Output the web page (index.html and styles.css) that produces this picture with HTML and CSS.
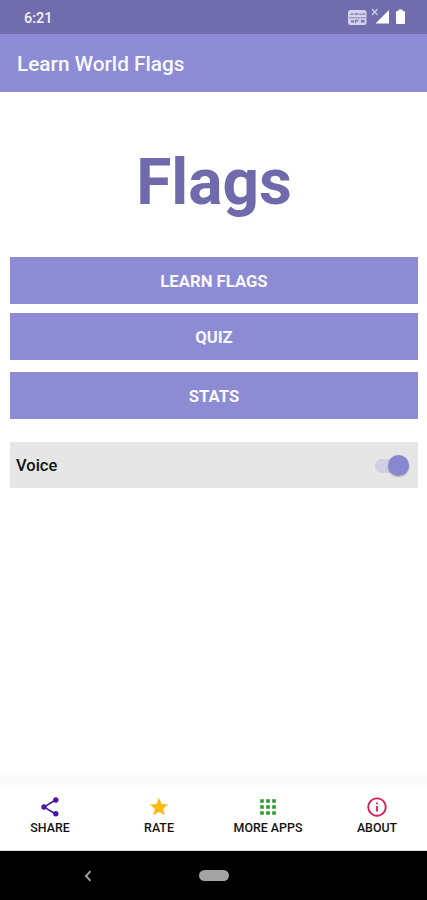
FILE: index.html
```html
<!DOCTYPE html>
<html lang="en">
<head>
<meta charset="utf-8">
<title>Learn World Flags</title>
<link rel="stylesheet" href="styles.css">
</head>
<body>
<div class="status">
  <span class="time">6:21</span>
  <svg class="status-icons" width="60" height="18" viewBox="0 0 60 18">
    <rect x="0" y="2" width="18.500" height="15" rx="2.500" fill="#d3d2ec"/>
    <path d="M2.500 6.200h3m1 0h4m1 0h2m1 0h2.500" stroke="#8f8bc0" stroke-width="1.800"/>
    <path d="M1 9.800h17" stroke="#8783ba" stroke-width="1"/>
    <path d="M3 12.500h3v2H3zM13 12h3.500v2.500H13z" fill="#7974af"/>
    <path d="M7.500 15v-2.500h3" fill="none" stroke="#7974af" stroke-width="1.300"/>
    <path d="M24 1l5.500 6m0-6l-5.500 6" stroke="#cfceea" stroke-width="1.300"/>
    <path d="M41 2v13.500H27.500z" fill="#fff"/>
    <path d="M50.500 1.500h4V3H56q1 0 1 1v11q0 1-1 1h-7q-1 0-1-1V4q0-1 1-1h1.500z" fill="#fff"/>
  </svg>
</div>
<header class="appbar">Learn World Flags</header>
<main class="content">
  <h1 class="title">Flags</h1>
  <div class="menu">
    <button class="btn">LEARN FLAGS</button>
    <button class="btn btn-quiz">QUIZ</button>
    <button class="btn">STATS</button>
  </div>
  <div class="voice">
    <span>Voice</span>
    <span class="switch"><span class="thumb"></span></span>
  </div>
</main>
<footer class="footer">
  <div class="item">
    <svg width="22" height="22" viewBox="0 0 22 22" fill="#4a16a8"><path d="M16.500 4L5 11l11.500 7" fill="none" stroke="#4a16a8" stroke-width="1.500"/><circle cx="16.800" cy="4" r="2.700"/><circle cx="5" cy="11" r="2.700"/><circle cx="16.800" cy="17.800" r="2.700"/></svg>
    <span>SHARE</span>
  </div>
  <div class="item">
    <svg width="22" height="22" viewBox="0 0 24 24"><path d="M12 17.270 18.180 21l-1.640-7.030L22 9.240l-7.190-.61L12 2 9.190 8.630 2 9.240l5.460 4.730L5.820 21z" fill="#fdbb12"/></svg>
    <span>RATE</span>
  </div>
  <div class="item">
    <svg width="22" height="22" viewBox="0 0 22 22"><path d="M3.200 3.200h3.600v3.600H3.200zm6 0h3.600v3.600H9.200zm6 0h3.600v3.600h-3.600zM3.200 9.200h3.600v3.600H3.200zm6 0h3.600v3.600H9.200zm6 0h3.600v3.600h-3.600zM3.200 15.200h3.600v3.600H3.200zm6 0h3.600v3.600H9.200zm6 0h3.600v3.600h-3.600z" fill="#2b9c2b"/></svg>
    <span>MORE APPS</span>
  </div>
  <div class="item">
    <svg width="22" height="22" viewBox="0 0 24 24"><path d="M11 7h2v2h-2zm0 4h2v6h-2zm1-9.500C6.200 1.500 1.500 6.200 1.500 12S6.200 22.500 12 22.500 22.500 17.800 22.500 12 17.800 1.500 12 1.500zm0 19c-4.700 0-8.500-3.800-8.500-8.500S7.300 3.500 12 3.500s8.500 3.800 8.500 8.500-3.800 8.500-8.500 8.500z" fill="#d91c56"/></svg>
    <span>ABOUT</span>
  </div>
</footer>
<nav class="navbar">
  <svg width="8" height="12" viewBox="0 0 8 12"><path d="M6.500 1.200L2 6l4.500 4.800" fill="none" stroke="#a0a0a0" stroke-width="1.900"/></svg>
  <span class="pill"></span>
  <span></span>
</nav>
</body>
</html>
```
FILE: styles.css
```css
* { box-sizing: border-box; }
body {
  margin: 0;
  height: 900px;
  display: flex;
  flex-direction: column;
  overflow: hidden;
  background: #fff;
  font-family: Roboto, sans-serif;
  font-weight: 500;
}
.status {
  height: 34px;
  padding: 2px 19px 0 24px;
  display: flex;
  align-items: center;
  justify-content: space-between;
  background: #706cad;
  color: #f3f3fd;
  font-size: 14.5px;
}
.status-icons { margin-top: -3px; }
.appbar {
  height: 58px;
  padding: 1px 17px 0;
  display: flex;
  align-items: center;
  background: #8c8bd3;
  color: #f8f8ff;
  font-size: 20.8px;
}
.content {
  flex: 1;
  padding: 0 9px 0 10px;
}
.title {
  margin: 52px 0 35px;
  height: 78px;
  line-height: 78px;
  text-align: center;
  color: #6e6aac;
  font-size: 64px;
  font-weight: 700;
}
.menu {
  display: flex;
  flex-direction: column;
}
.btn {
  height: 47px;
  padding: 1px 0 0;
  border: 0;
  background: #8c8bd3;
  color: #f8f8ff;
  font: 700 16.7px Roboto, sans-serif;
}
.btn-quiz { margin: 9px 0 12px; }
.voice {
  height: 46px;
  margin-top: 23px;
  padding: 1px 9px 0 6px;
  display: flex;
  align-items: center;
  justify-content: space-between;
  background: #e6e6e6;
  color: #111;
  font-size: 16.5px;
}
.switch {
  width: 34px;
  height: 14px;
  border-radius: 7px;
  display: flex;
  align-items: center;
  justify-content: flex-end;
  background: #cfcfe5;
}
.thumb {
  width: 21px;
  height: 21px;
  border-radius: 50%;
  background: #8887d0;
  box-shadow: 0 1px 2px rgba(0, 0, 0, .25);
}
.footer {
  height: 77px;
  padding-top: 11px;
  border-top: 11px solid #fafafa;
  border-bottom: 1px solid #ddd;
  display: grid;
  grid-template-columns: repeat(4, 109px);
  justify-content: center;
  color: #111;
  font-size: 12.4px;
}
.item {
  display: flex;
  flex-direction: column;
  align-items: center;
  gap: 3px;
  line-height: 14px;
}
.navbar {
  height: 49px;
  padding: 0 84px;
  display: grid;
  grid-template-columns: 1fr 30px 1fr;
  align-items: center;
  background: #000;
}
.pill {
  height: 10.5px;
  border-radius: 6px;
  background: #a3a3a3;
}
```
